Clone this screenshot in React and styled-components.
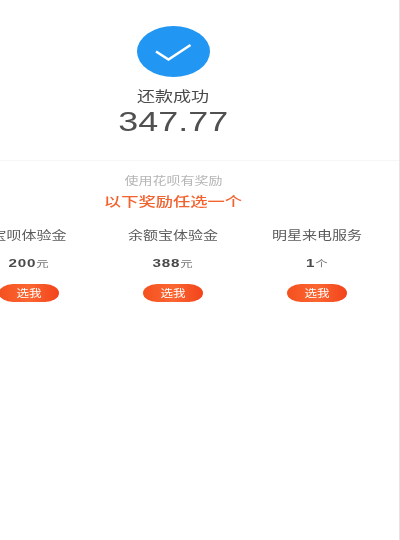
import React from 'react';
import styled, { createGlobalStyle } from 'styled-components'

const Global = createGlobalStyle`
html, body {
  margin: 0;
  padding: 0;
  background: #fff;
}
#root {
  width: 400px;
  height: 540px;
  overflow: hidden;
}
`
const Principal = styled.div`
width: 400px;
height: 540px;
box-sizing: border-box;
overflow: hidden;
border-right: 1px solid #e4e4e4;
font-family: "Noto Sans CJK SC", "Liberation Sans", sans-serif;
filter: blur(0.35px);
`
const Resultado = styled.div`
height: 161px;
box-sizing: border-box;
padding-top: 26px;
padding-right: 53px;
display: flex;
flex-direction: column;
align-items: center;
border-bottom: 1px solid #f6f6f6;
`
const Circulo = styled.div`
width: 73px;
height: 51px;
border-radius: 50%;
background: #2196f3;
display: flex;
align-items: center;
justify-content: center;
`
const Titulo = styled.div`
margin-top: 8px;
height: 20px;
line-height: 20px;
font-size: 14px;
color: #4a4a4a;
transform: scaleX(1.29);
`
const Valor = styled.div`
margin-top: 2px;
height: 30px;
line-height: 30px;
font-family: "Liberation Sans", sans-serif;
font-size: 27px;
color: #505050;
transform: scaleX(1.33);
`
const Premios = styled.div`
display: flex;
flex-direction: column;
align-items: center;
padding-top: 10px;
padding-right: 53px;
`
const Aviso = styled.div`
height: 18px;
line-height: 18px;
font-size: 11px;
color: #b5b5b5;
transform: scaleX(1.27);
`
const Destaque = styled.div`
margin-top: 2px;
height: 20px;
line-height: 20px;
font-size: 13px;
font-weight: 500;
color: #f2622e;
transform: scaleX(1.33);
`
const Lista = styled.div`
display: flex;
width: 432px;
margin-top: 14px;
flex-shrink: 0;
`
const Item = styled.div`
width: 144px;
display: flex;
flex-direction: column;
align-items: center;
`
const Nome = styled.div`
height: 20px;
line-height: 20px;
font-size: 12px;
white-space: nowrap;
color: #5a5a5a;
transform: scaleX(1.25);
`
const Quantia = styled.div`
margin-top: 9px;
height: 18px;
line-height: 18px;
font-size: 11px;
font-weight: 700;
font-family: "Liberation Sans", "Noto Sans CJK SC", sans-serif;
letter-spacing: 0.6px;
color: #4a4a4a;
transform: scaleX(1.38);
`
const Unidade = styled.span`
font-size: 9px;
font-weight: 400;
letter-spacing: 0;
font-family: "Noto Sans CJK SC", sans-serif;
color: #777;
`
const Botao = styled.button`
margin-top: 12px;
width: 60px;
height: 18px;
padding: 0;
border: 0;
border-radius: 14px / 9px;
background: linear-gradient(90deg, #f4501f, #fb6632 50%, #f2431b);
color: #fff;
font-family: inherit;
font-size: 10px;
line-height: 18px;
`
const BotaoTexto = styled.span`
display: inline-block;
transform: scaleX(1.25);
`

const premios = [
  { nome: "宝呗体验金", qtd: "200", unidade: "元" },
  { nome: "余额宝体验金", qtd: "388", unidade: "元" },
  { nome: "明星来电服务", qtd: "1", unidade: "个" },
]

class App extends React.Component {
  render() {
    return (
      <Principal>
        <Global />
        <Resultado>
          <Circulo>
            <svg width="38" height="20" viewBox="0 0 38 20">
              <path d="M2 9.5 L14.5 17.5 L36.5 3" fill="none" stroke="#fff" strokeWidth="2.6" />
            </svg>
          </Circulo>
          <Titulo>还款成功</Titulo>
          <Valor>347.77</Valor>
        </Resultado>
        <Premios>
          <Aviso>使用花呗有奖励</Aviso>
          <Destaque>以下奖励任选一个</Destaque>
          <Lista>
            {premios.map((p) => (
              <Item key={p.nome}>
                <Nome>{p.nome}</Nome>
                <Quantia>{p.qtd}<Unidade>{p.unidade}</Unidade></Quantia>
                <Botao><BotaoTexto>选我</BotaoTexto></Botao>
              </Item>
            ))}
          </Lista>
        </Premios>
      </Principal>
    );
  }
}

export default App;
